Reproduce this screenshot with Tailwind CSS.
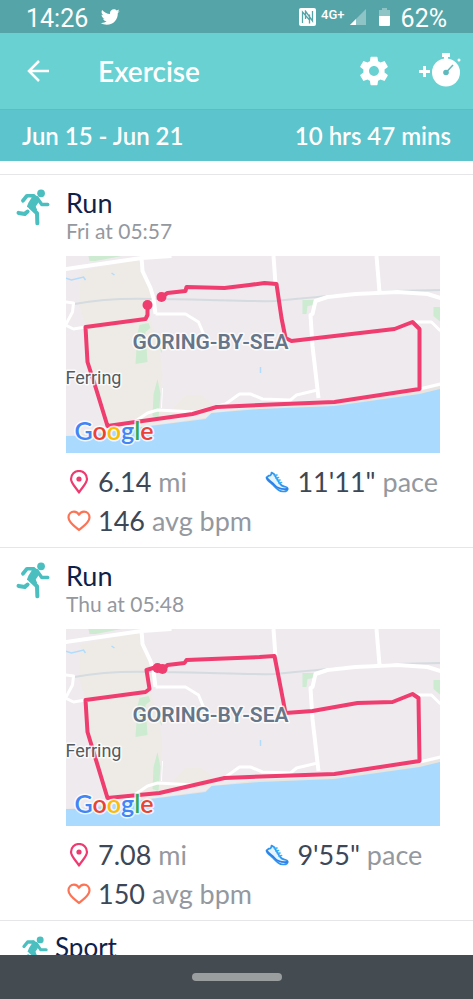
<!DOCTYPE html>
<html lang="en">
<head>
  <meta charset="UTF-8" />
  <meta name="viewport" content="width=device-width, initial-scale=1.0"/>
  <title>Exercise</title>
  <script src="https://cdn.jsdelivr.net/npm/@tailwindcss/browser@4"></script>
</head>
<body class="bg-white font-[Lato,sans-serif]">

  <!-- Shared drawings -->
  <svg class="hidden" aria-hidden="true">
    <symbol id="runner" viewBox="0 0 100 110">
      <g fill="none" stroke="#4bbfc0" stroke-linecap="round" stroke-linejoin="round">
        <circle cx="74" cy="13" r="11.5" fill="#4bbfc0" stroke="none"/>
        <path d="M20 35 32 20H52" stroke-width="11"/>
        <path d="M62 26 76 46H94" stroke-width="10"/>
        <path d="M50 17 62 23 68 34 56 52 60 62 48 60 34 52 38 42 47 28Z" fill="#4bbfc0" stroke-width="4"/>
        <path d="M43 54 62 72 63 102" stroke-width="12"/>
        <path d="M7 71 26 74 34 67" stroke-width="12"/>
      </g>
    </symbol>

    <symbol id="pin" viewBox="0 0 20 24">
      <path d="M10 22.500C7.500 18 2 13.500 2 9a8 8 0 0 1 16 0c0 4.500-5.500 9-8 13.500Z" fill="none" stroke="#ee3a70" stroke-width="2.200" stroke-linejoin="round"/>
      <circle cx="10" cy="9" r="2.600" fill="#ee3a70"/>
    </symbol>

    <symbol id="heart" viewBox="0 0 24 22">
      <path d="M12 20C8 16.500 1.500 12.500 1.500 7.500 1.500 4 4 1.600 7 1.600c2.200 0 4 1.200 5 3.200 1-2 2.800-3.200 5-3.200 3 0 5.500 2.400 5.500 5.900 0 5-6.500 9-10.500 12.500Z" fill="none" stroke="#fb7456" stroke-width="2.200" stroke-linejoin="round"/>
    </symbol>

    <symbol id="shoe" viewBox="0 0 24 22">
      <g fill="none" stroke="#2f95ee" stroke-width="1.700" stroke-linejoin="round" stroke-linecap="round">
        <path d="M1.500 6.500 4 4.500C5.500 5 6.500 3.500 6.500 1.500L9 3 14.500 12C16 14.800 18 15.500 21 16 23 16.500 23.300 18.500 22 19.500 20 21 16 20.800 13.500 19 10.500 16.800 9 14.500 6.500 12.500 4 10.500 1.500 9 1.500 6.500Z" fill="#e6f4fe"/>
        <path d="M2 7C4 10 7 11 9.500 14 12.500 17.500 16 18.500 22 18" stroke="#2f7fe8" stroke-width="1.800"/>
        <path d="M9.500 4.500 12 4M11 7l2.500-.5M12.500 9.500 15 9M14 12l2.500-.5" stroke="#35b1fb"/>
      </g>
    </symbol>

    <symbol id="basemap" viewBox="0 0 375 197">
      <rect width="375" height="197" fill="#eeeaee"/>
      <path d="M15 15 76 3 78 20 88 38 84 60 20 70 14 50Z" fill="#eeebe7"/>
      <path d="M20 71 84 60 94 92 97 120 92 155 130 155 145 156 60 173 42 170 22 106Z" fill="#eeebe7"/>
      <path d="M108 151 120 139H136L146 147 150 156 108 162Z" fill="#eeebe7"/>
      <path d="M23 0H56L30 5H24ZM74 69 83 67 85 72 80 76 82 106 70 108 72 77ZM92 123 95 138 93 162 87 160 88 138ZM237 44H249L248 49 242 50 241 58H237ZM368 51H375V66L368 60Z" fill="#cdebd0"/>
      <path d="M94 92 97 93 96 97Z" fill="#cdebd0"/>
      <path d="M0 180 60 173 140 162 146 157 194 151 269 148 354 135 375 130V197H0Z" fill="#e8e4df"/>
      <path d="M0 180 20 180 61 173 140 163 146 157 194 153 269 150 354 138 375 133V197H0Z" fill="#abdaff"/>
      <path d="M0 22 6 24 18 21 20 24M46 17 49 19M195 111v6" fill="none" stroke="#b2dcfb" stroke-width="1.500"/>
      <path d="M9 48C35 43 60 42 90 43 140 43 180 46 210 45 250 41 290 37 330 35L375 34" fill="none" stroke="#d5dbdf" stroke-width="2"/>
      <g fill="none" stroke="#fff" stroke-width="4" stroke-linejoin="round">
        <path d="M0 13 76 2 106 0M76 0 77 15 85 32 88 42 90 58"/>
        <path d="M90 58H120L133 66 138 78 146 90" stroke-width="3"/>
        <path d="M0 69 7 56 8 47 0 46M0 69 8 73 20 71" stroke-width="3"/>
        <path d="M208 0 210 28M311 0 314 36M375 42 362 38 332 36 290 38 262 41 250 45 247 58 245 59 247 90 253 142"/>
        <path d="M347 66H366L375 75M354 133 375 128" stroke-width="3"/>
        <path d="M60 172 82 157 92 154 130 156 160 148 174 138H185L197 143 225 144 231 139 252 134" stroke-width="3"/>
        <path d="M97 132 96 152" stroke-width="1"/>
      </g>
    </symbol>

    <symbol id="maplabels" viewBox="0 0 375 197">
      <g stroke="#fff" stroke-opacity="0.8" stroke-width="3" stroke-linejoin="round" paint-order="stroke" font-family="Roboto, sans-serif">
        <text x="67" y="93" font-size="21" font-weight="600" fill="#667587">GORING-BY-SEA</text>
        <text x="0" y="128" font-size="18" fill="#545a60">Ferring</text>
        <text x="9" y="184" font-size="25" font-weight="600" font-family="Lato, sans-serif"><tspan fill="#4285f4">G</tspan><tspan fill="#ea4335">o</tspan><tspan fill="#fbbc05">o</tspan><tspan fill="#4285f4">g</tspan><tspan fill="#34a853">l</tspan><tspan fill="#ea4335">e</tspan></text>
      </g>
    </symbol>
  </svg>

  <div class="flex h-screen flex-col overflow-hidden">

    <!-- Status bar -->
    <div class="flex h-[33px] shrink-0 items-center bg-[#55a5a8] px-[26px] pt-1 font-[Roboto,sans-serif] text-[25px] leading-7 text-white">
      <span>14:26</span>
      <svg class="mb-1 ml-3 size-5" viewBox="0 0 24 24" fill="#fff"><path d="M23.643 4.937c-.835.37-1.732.62-2.675.733.962-.576 1.7-1.49 2.048-2.578-.9.534-1.897.922-2.958 1.13-.85-.904-2.06-1.47-3.4-1.47-2.572 0-4.658 2.086-4.658 4.66 0 .364.042.718.12 1.06-3.873-.195-7.304-2.05-9.602-4.868-.4.69-.63 1.49-.63 2.342 0 1.616.823 3.043 2.072 3.878-.764-.025-1.482-.234-2.11-.583v.06c0 2.257 1.605 4.14 3.737 4.568-.392.106-.803.162-1.227.162-.3 0-.593-.028-.877-.082.593 1.85 2.313 3.198 4.352 3.234-1.595 1.25-3.604 1.995-5.786 1.995-.376 0-.747-.022-1.112-.065 2.062 1.323 4.51 2.093 7.14 2.093 8.57 0 13.255-7.098 13.255-13.254 0-.2-.005-.402-.014-.602.91-.658 1.7-1.477 2.323-2.41z"/></svg>
      <svg class="mb-1 ml-auto h-[18px] w-[17px]" viewBox="0 0 17 18">
        <rect width="17" height="18" rx="2" fill="#fff"/>
        <path d="M3.500 15V4L11 12.500M6 2.500 13.500 13V3M6.500 4v7M10.500 6.500v9" fill="none" stroke="#55a5a8" stroke-width="1.300"/>
      </svg>
      <span class="mb-2 ml-[5px] text-[13px] font-medium">4G+</span>
      <svg class="mb-1 ml-[5px] size-4" viewBox="0 0 16 16"><path d="M16 0V16H0Z" fill="#8fc4c6"/><path d="M6 10V16H0Z" fill="#fff"/></svg>
      <svg class="mb-1 ml-[13px] h-[18px] w-[11px]" viewBox="0 0 11 18"><path d="M3 0H8V2H11V8H0V2H3Z" fill="#8fc4c6"/><path d="M0 8H11V17a1 1 0 0 1-1 1H1a1 1 0 0 1-1-1Z" fill="#fff"/></svg>
      <span class="ml-[11px]">62%</span>
    </div>

    <!-- App bar -->
    <header class="flex h-[77px] shrink-0 items-center border-b border-[#5dbcc1] bg-[#69d1d2] pr-3 pl-[27px] text-white">
      <button type="button" aria-label="Back">
        <svg class="h-[22px] w-[23px]" viewBox="0 0 23 22" fill="none" stroke="#fff" stroke-width="2.500"><path d="M22 11H2M12 1 2 11 12 21"/></svg>
      </button>
      <h1 class="ml-12 text-[28px] leading-8 font-semibold">Exercise</h1>
      <button type="button" aria-label="Settings" class="ml-auto">
        <svg class="size-[34px]" viewBox="0 0 24 24" fill="#fff"><path d="M19.430 12.980c.04-.32.07-.64.07-.98s-.03-.66-.07-.98l2.110-1.650c.19-.15.24-.42.12-.64l-2-3.460c-.12-.22-.39-.3-.61-.22l-2.490 1c-.52-.4-1.080-.73-1.690-.98l-.38-2.650C14.460 2.180 14.250 2 14 2h-4c-.25 0-.46.18-.49.42l-.38 2.650c-.61.25-1.170.59-1.690.98l-2.490-1c-.23-.09-.49 0-.61.22l-2 3.460c-.13.22-.07.49.12.64l2.110 1.650c-.04.32-.07.65-.07.98s.03.66.07.98l-2.110 1.650c-.19.15-.24.42-.12.64l2 3.460c.12.22.39.3.61.22l2.490-1c.52.4 1.080.73 1.690.98l.38 2.650c.03.24.24.42.49.42h4c.25 0 .46-.18.49-.42l.38-2.650c.61-.25 1.170-.59 1.690-.98l2.490 1c.23.09.49 0 .61-.22l2-3.460c.12-.22.07-.49-.12-.64l-2.110-1.650zM12 15.500c-1.930 0-3.500-1.570-3.500-3.500s1.570-3.500 3.500-3.500 3.500 1.570 3.500 3.500-1.570 3.500-3.500 3.500z"/></svg>
      </button>
      <button type="button" aria-label="Start exercise" class="mb-1 ml-7">
        <svg class="h-[35px] w-[42px]" viewBox="0 0 42 35">
          <path d="M5.500 14v11M0 19.500h11" stroke="#fff" stroke-width="3"/>
          <circle cx="27" cy="20.500" r="14" fill="#fff"/>
          <path d="M23 1h8v4h-2v3h-4V5h-2z" fill="#fff"/>
          <circle cx="40" cy="8" r="1.500" fill="#fff"/>
          <path d="M27 20.500 34 13" stroke="#5fb9bd" stroke-width="1.500"/>
          <circle cx="27" cy="20.500" r="2.800" fill="#5fb9bd"/>
        </svg>
      </button>
    </header>

    <!-- Week summary -->
    <div class="flex h-[51px] shrink-0 items-center justify-between bg-[#5cc4cc] px-[22px] text-2xl leading-8 font-semibold text-white">
      <span>Jun 15 - Jun 21</span>
      <span>10 hrs 47 mins</span>
    </div>

    <!-- Exercise list -->
    <main class="min-h-0 flex-1 overflow-hidden pt-[13px] text-[#3c4757]">

      <article class="flex border-t border-[#e6e6e8] pt-[14px] pr-[33px] pb-[7px] pl-4">
        <svg class="h-[37px] w-[34px] shrink-0"><use href="#runner"/></svg>
        <div class="ml-4 flex-1">
          <h2 class="text-[27px] leading-7 text-[#0f2148]">Run</h2>
          <p class="text-[21px] leading-7 text-[#94989f]">Fri at 05:57</p>
          <svg class="mt-[11px] aspect-[374/197] w-full" viewBox="0 0 375 197" preserveAspectRatio="xMidYMid slice">
            <use href="#basemap"/>
            <path d="M82 49V59L80 63 20 71 22 106 30 131 42 170 77 165 127 158 151 151 194 149 269 146 354 133V73L347 66 329 73 226 85 220 82 216 62 211 28 199 27 184 29 159 32 121 31 120 35 102 37 96 41" fill="none" stroke="#ee3d6e" stroke-width="4" stroke-linejoin="round"/>
            <circle cx="82" cy="49" r="5" fill="#ee3d6e"/>
            <circle cx="96" cy="41" r="5" fill="#ee3d6e"/>
            <use href="#maplabels"/>
          </svg>
          <div class="mt-[9px] grid grid-cols-[8fr_7fr] text-[27px] leading-[39px]">
            <p class="flex items-center"><svg class="mx-[3px] h-6 w-5"><use href="#pin"/></svg><span class="ml-[6px]">6.14 <span class="text-[#94989f]">mi</span></span></p>
            <p class="flex items-center"><svg class="h-[22px] w-6"><use href="#shoe"/></svg><span class="ml-2">11'11" <span class="text-[#94989f]">pace</span></span></p>
            <p class="flex items-center"><svg class="mx-px h-[22px] w-6"><use href="#heart"/></svg><span class="ml-[6px]">146 <span class="text-[#94989f]">avg bpm</span></span></p>
          </div>
        </div>
      </article>

      <article class="flex border-t border-[#e6e6e8] pt-[14px] pr-[33px] pb-[7px] pl-4">
        <svg class="h-[37px] w-[34px] shrink-0"><use href="#runner"/></svg>
        <div class="ml-4 flex-1">
          <h2 class="text-[27px] leading-7 text-[#0f2148]">Run</h2>
          <p class="text-[21px] leading-7 text-[#94989f]">Thu at 05:48</p>
          <svg class="mt-[11px] aspect-[374/197] w-full" viewBox="0 0 375 197" preserveAspectRatio="xMidYMid slice">
            <use href="#basemap"/>
            <path d="M91 38 81 41 84 60 80 63 20 71 22 103 42 169 94 164 159 149 184 148 269 145 354 132 353 69 347 65 327 73 292 74 247 82 220 84 216 63 209 27 194 28 121 31 119 34 102 36 97 41" fill="none" stroke="#ee3d6e" stroke-width="4" stroke-linejoin="round"/>
            <circle cx="92" cy="39" r="5" fill="#ee3d6e"/>
            <circle cx="97" cy="40" r="5" fill="#ee3d6e"/>
            <use href="#maplabels"/>
          </svg>
          <div class="mt-[9px] grid grid-cols-[8fr_7fr] text-[27px] leading-[39px]">
            <p class="flex items-center"><svg class="mx-[3px] h-6 w-5"><use href="#pin"/></svg><span class="ml-[6px]">7.08 <span class="text-[#94989f]">mi</span></span></p>
            <p class="flex items-center"><svg class="h-[22px] w-6"><use href="#shoe"/></svg><span class="ml-2">9'55" <span class="text-[#94989f]">pace</span></span></p>
            <p class="flex items-center"><svg class="mx-px h-[22px] w-6"><use href="#heart"/></svg><span class="ml-[6px]">150 <span class="text-[#94989f]">avg bpm</span></span></p>
          </div>
        </div>
      </article>

      <article class="flex border-t border-[#e6e6e8] pt-3 pr-[33px] pl-[18px]">
        <svg class="mt-[3px] h-[33px] w-[30px] shrink-0"><use href="#runner"/></svg>
        <h2 class="ml-[7px] text-[26px] leading-7 text-[#0f2148]">Sport</h2>
      </article>
    </main>

    <!-- Gesture bar -->
    <div class="flex h-11 shrink-0 items-center justify-center bg-[#444c51]">
      <div class="h-2 w-[90px] rounded-full bg-[#9b9e9f]"></div>
    </div>
  </div>
</body>
</html>
